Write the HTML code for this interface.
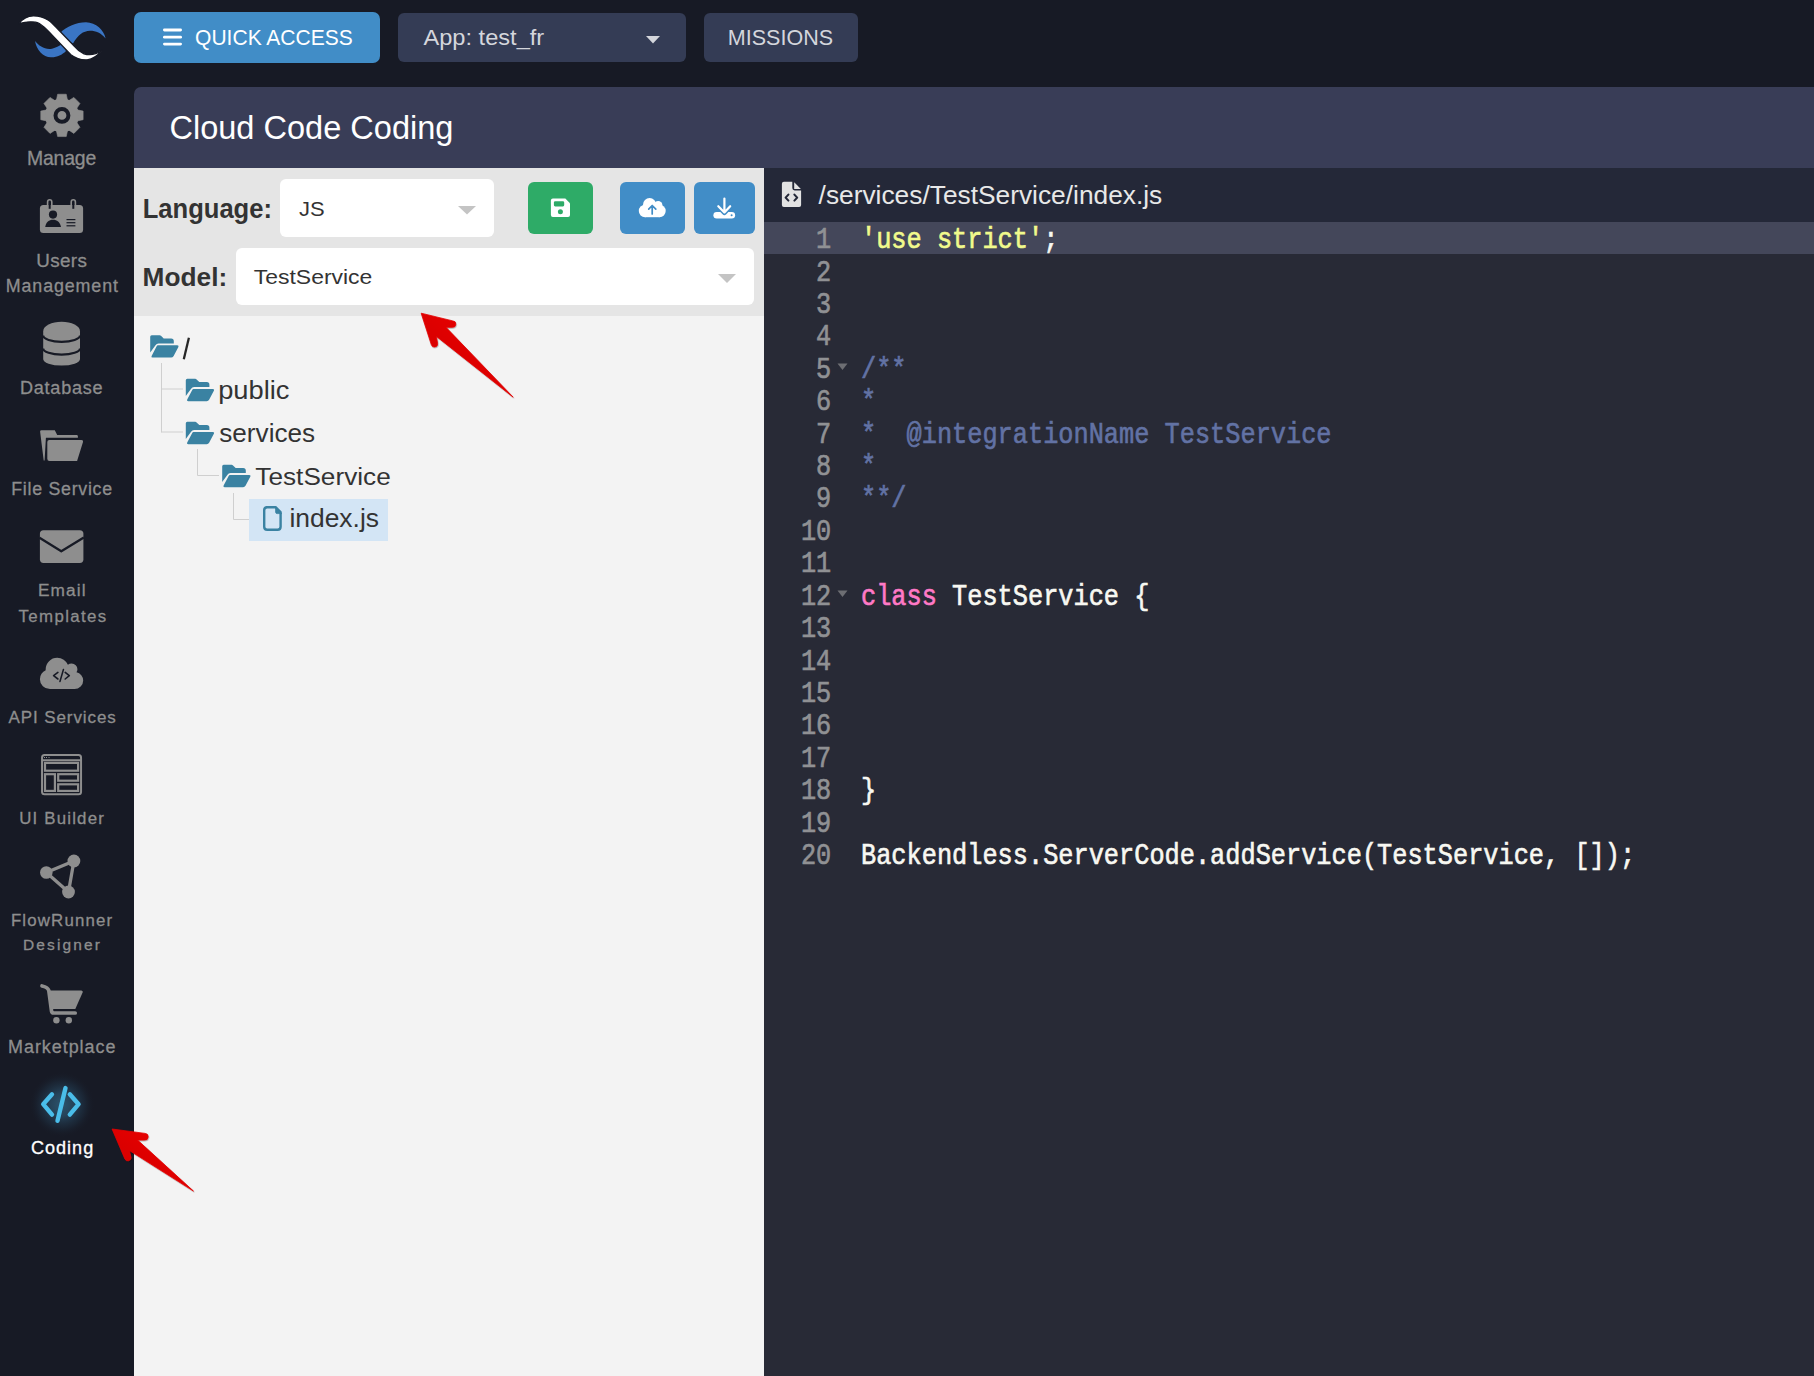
<!DOCTYPE html>
<html><head><meta charset="utf-8"><title>Cloud Code Coding</title>
<style>
html,body{margin:0;padding:0;}
body{width:1814px;height:1376px;background:#171a25;position:relative;overflow:hidden;font-family:"Liberation Sans", sans-serif;}
svg text{white-space:pre;}
</style></head><body>
<div style="position:absolute;left:134px;top:12px;width:246px;height:51px;background:#418dc7;border-radius:7px;"></div><div style="position:absolute;left:398px;top:13px;width:288px;height:49px;background:#343c55;border-radius:6px;"></div><div style="position:absolute;left:704px;top:13px;width:154px;height:49px;background:#343c55;border-radius:6px;"></div><div style="position:absolute;left:134px;top:87px;width:1680px;height:81px;background:#393d57;border-radius:7px 0 0 0;"></div><div style="position:absolute;left:134px;top:168px;width:630px;height:148px;background:#e5e5e5;border-radius:0;"></div><div style="position:absolute;left:134px;top:316px;width:630px;height:1060px;background:#f3f3f3;border-radius:0;"></div><div style="position:absolute;left:280px;top:179px;width:214px;height:58px;background:#ffffff;border-radius:6px;"></div><div style="position:absolute;left:528px;top:182px;width:65px;height:52px;background:#2eab67;border-radius:6px;"></div><div style="position:absolute;left:620px;top:182px;width:65px;height:52px;background:#418dc7;border-radius:6px;"></div><div style="position:absolute;left:694px;top:182px;width:61px;height:52px;background:#418dc7;border-radius:6px;"></div><div style="position:absolute;left:236px;top:248px;width:518px;height:57px;background:#ffffff;border-radius:6px;"></div><div style="position:absolute;left:249px;top:498.5px;width:139px;height:42.5px;background:#d3e5f5;border-radius:0;"></div><div style="position:absolute;left:764px;top:168px;width:1050px;height:1208px;background:#282a36;border-radius:0;"></div><div style="position:absolute;left:764px;top:168px;width:1050px;height:54px;background:#242838;border-radius:0;"></div><div style="position:absolute;left:764px;top:222px;width:1050px;height:32px;background:#44475a;border-radius:0;"></div>
<svg width="1814" height="1376" style="position:absolute;left:0;top:0" viewBox="0 0 1814 1376"><defs>
<radialGradient id="glow"><stop offset="0" stop-color="#2c546e" stop-opacity="1"/><stop offset="0.35" stop-color="#284a62" stop-opacity="0.85"/><stop offset="0.7" stop-color="#1f3346" stop-opacity="0.45"/><stop offset="1" stop-color="#171a25" stop-opacity="0"/></radialGradient>
<linearGradient id="red" x1="0" y1="1" x2="1" y2="0"><stop offset="0" stop-color="#d20000"/><stop offset="0.45" stop-color="#dc0000"/><stop offset="1" stop-color="#f20000"/></linearGradient>
<filter id="sh" x="-20%" y="-20%" width="140%" height="140%"><feDropShadow dx="0.5" dy="0.8" stdDeviation="0.6" flood-color="#000" flood-opacity="0.35"/></filter>
</defs><line x1="164.4" y1="30.0" x2="180.6" y2="30.0" stroke="#fff" stroke-width="2.8" stroke-linecap="round"/><line x1="164.4" y1="37.2" x2="180.6" y2="37.2" stroke="#fff" stroke-width="2.8" stroke-linecap="round"/><line x1="164.4" y1="44.1" x2="180.6" y2="44.1" stroke="#fff" stroke-width="2.8" stroke-linecap="round"/><text x="195.06" y="44.80" font-family="'Liberation Sans'" font-weight="normal" font-size="21.04" fill="#ffffff" transform="translate(0 44.80) scale(1 1.0308) translate(0 -44.80)">QUICK ACCESS</text><text x="423.50" y="45.00" font-family="'Liberation Sans'" font-weight="normal" font-size="23.62" fill="#d4d6dc" transform="translate(0 45.00) scale(1 0.9459) translate(0 -45.00)">App: test_fr</text><polygon points="646,36 660,36 653,43.5" fill="#d4d6dc"/><text x="727.78" y="45.30" font-family="'Liberation Sans'" font-weight="normal" font-size="21.54" fill="#d4d6dc" transform="translate(0 45.30) scale(1 1.0659) translate(0 -45.30)">MISSIONS</text><text x="169.47" y="139.00" font-family="'Liberation Sans'" font-weight="normal" font-size="32.55" fill="#ffffff" transform="translate(0 139.00) scale(1 1.0018) translate(0 -139.00)">Cloud Code Coding</text><text x="142.67" y="217.60" font-family="'Liberation Sans'" font-weight="bold" font-size="25.58" fill="#333333" transform="translate(0 217.60) scale(1 1.0709) translate(0 -217.60)">Language:</text><text x="298.98" y="215.60" font-family="'Liberation Sans'" font-weight="normal" font-size="21.96" fill="#333333" transform="translate(0 215.60) scale(1 0.9170) translate(0 -215.60)">JS</text><polygon points="458,206 476,206 467,214.6" fill="#c4c4c4"/><path d="M552.9,198.4 L565.3,198.4 L570,203.3 L570,215.1 Q570,217.1 568,217.1 L552.9,217.1 Q550.9,217.1 550.9,215.1 L550.9,200.4 Q550.9,198.4 552.9,198.4 Z" fill="#ffffff"/><rect x="553.9" y="201.2" width="10.3" height="5.2" rx="1.3" fill="#2eab67"/><circle cx="560.4" cy="211.8" r="2.5" fill="#2eab67"/><g fill="#ffffff"><circle cx="649.6" cy="204.7" r="6.6"/><circle cx="658.2" cy="205.2" r="4.2"/><circle cx="645.0" cy="211.0" r="6.2"/><circle cx="659.5" cy="211.0" r="6.2"/><rect x="645" y="205" width="14.5" height="12.2"/></g><path d="M652.2,214 L652.2,205.6 M648.7,209.1 L652.2,205.5 L655.8,209.1" stroke="#418dc7" stroke-width="1.7" fill="none" stroke-linecap="round" stroke-linejoin="round"/><rect x="713.4" y="212" width="21.7" height="6.6" rx="3.3" fill="#ffffff"/><path d="M718.3,206.2 L724.4,212.4 L730.2,206.2" stroke="#418dc7" stroke-width="5.2" fill="none" stroke-linecap="round" stroke-linejoin="round"/><path d="M724.4,198.6 L724.4,212 M718.3,206.2 L724.4,212.4 L730.2,206.2" stroke="#ffffff" stroke-width="2.2" fill="none" stroke-linecap="round" stroke-linejoin="round"/><circle cx="731.6" cy="215.2" r="1" fill="#418dc7"/><text x="142.62" y="286.40" font-family="'Liberation Sans'" font-weight="bold" font-size="26.27" fill="#333333" transform="translate(0 286.40) scale(1 0.9596) translate(0 -286.40)">Model:</text><text x="253.84" y="284.00" font-family="'Liberation Sans'" font-weight="normal" font-size="22.94" fill="#333333" transform="translate(0 284.00) scale(1 0.9194) translate(0 -284.00)">TestService</text><polygon points="718,274 736,274 727,283" fill="#c4c4c4"/><line x1="161.5" y1="363" x2="161.5" y2="432.5" stroke="#cfcfcf" stroke-width="1"/><line x1="161.5" y1="389" x2="183" y2="389" stroke="#cfcfcf" stroke-width="1"/><line x1="161.5" y1="432" x2="183" y2="432" stroke="#cfcfcf" stroke-width="1"/><line x1="197.5" y1="449" x2="197.5" y2="475.5" stroke="#cfcfcf" stroke-width="1"/><line x1="197.5" y1="475.5" x2="219" y2="475.5" stroke="#cfcfcf" stroke-width="1"/><line x1="233.5" y1="493" x2="233.5" y2="519.5" stroke="#cfcfcf" stroke-width="1"/><line x1="233.5" y1="519.5" x2="249" y2="519.5" stroke="#cfcfcf" stroke-width="1"/><g transform="translate(0,0)" fill="#3a82a2"><path d="M151.7,335.2 L159.6,335.2 Q160.4,335.2 161,335.8 L163.7,338.5 L171.2,338.5 Q173.8,338.5 173.8,341.2 L173.8,343.4 L158.5,343.4 Q156.5,343.4 155.5,345.2 L150.2,352.5 L150.2,336.7 Q150.2,335.2 151.7,335.2 Z"/><path d="M157.9,345.3 L177.3,345.3 Q179.1,345.4 178.4,346.9 L173.5,356.2 Q172.7,357.6 171.1,357.6 L152.6,357.6 Q150.8,357.6 151.6,356 L156.5,346.6 Q157.1,345.3 157.9,345.3 Z"/></g><line x1="188.9" y1="337.8" x2="183.8" y2="359.2" stroke="#262626" stroke-width="2.3" stroke-linecap="butt"/><g transform="translate(35.6,43.6)" fill="#3a82a2"><path d="M151.7,335.2 L159.6,335.2 Q160.4,335.2 161,335.8 L163.7,338.5 L171.2,338.5 Q173.8,338.5 173.8,341.2 L173.8,343.4 L158.5,343.4 Q156.5,343.4 155.5,345.2 L150.2,352.5 L150.2,336.7 Q150.2,335.2 151.7,335.2 Z"/><path d="M157.9,345.3 L177.3,345.3 Q179.1,345.4 178.4,346.9 L173.5,356.2 Q172.7,357.6 171.1,357.6 L152.6,357.6 Q150.8,357.6 151.6,356 L156.5,346.6 Q157.1,345.3 157.9,345.3 Z"/></g><text x="218.16" y="398.90" font-family="'Liberation Sans'" font-weight="normal" font-size="27.28" fill="#333333" transform="translate(0 398.90) scale(1 0.9440) translate(0 -398.90)">public</text><g transform="translate(35.6,86.6)" fill="#3a82a2"><path d="M151.7,335.2 L159.6,335.2 Q160.4,335.2 161,335.8 L163.7,338.5 L171.2,338.5 Q173.8,338.5 173.8,341.2 L173.8,343.4 L158.5,343.4 Q156.5,343.4 155.5,345.2 L150.2,352.5 L150.2,336.7 Q150.2,335.2 151.7,335.2 Z"/><path d="M157.9,345.3 L177.3,345.3 Q179.1,345.4 178.4,346.9 L173.5,356.2 Q172.7,357.6 171.1,357.6 L152.6,357.6 Q150.8,357.6 151.6,356 L156.5,346.6 Q157.1,345.3 157.9,345.3 Z"/></g><text x="219.28" y="441.80" font-family="'Liberation Sans'" font-weight="normal" font-size="26.15" fill="#333333" transform="translate(0 441.80) scale(1 0.9900) translate(0 -441.80)">services</text><g transform="translate(72,129.6)" fill="#3a82a2"><path d="M151.7,335.2 L159.6,335.2 Q160.4,335.2 161,335.8 L163.7,338.5 L171.2,338.5 Q173.8,338.5 173.8,341.2 L173.8,343.4 L158.5,343.4 Q156.5,343.4 155.5,345.2 L150.2,352.5 L150.2,336.7 Q150.2,335.2 151.7,335.2 Z"/><path d="M157.9,345.3 L177.3,345.3 Q179.1,345.4 178.4,346.9 L173.5,356.2 Q172.7,357.6 171.1,357.6 L152.6,357.6 Q150.8,357.6 151.6,356 L156.5,346.6 Q157.1,345.3 157.9,345.3 Z"/></g><text x="255.38" y="484.90" font-family="'Liberation Sans'" font-weight="normal" font-size="26.19" fill="#333333" transform="translate(0 484.90) scale(1 0.9362) translate(0 -484.90)">TestService</text><path d="M266.2,507.2 L275.6,507.2 L280.6,512.2 L280.6,526.7 Q280.6,529.7 277.6,529.7 L267.2,529.7 Q264.2,529.7 264.2,526.7 L264.2,510.2 Q264.2,507.2 267.2,507.2 Z" fill="none" stroke="#3a82a2" stroke-width="2.4" stroke-linejoin="round"/><path d="M275.6,507.2 L275.6,512 Q275.6,513.6 277.2,513.6 L281.6,513.6 Z" fill="#3a82a2" stroke="#3a82a2" stroke-width="0.8" stroke-linejoin="round"/><text x="289.41" y="527.20" font-family="'Liberation Sans'" font-weight="normal" font-size="26.45" fill="#333333" transform="translate(0 527.20) scale(1 0.9685) translate(0 -527.20)">index.js</text><path d="M783.9,181.8 L792.3,181.8 L792.3,188 Q792.3,190.4 794.7,190.4 L801.1,190.4 L801.1,205.1 Q801.1,207.1 799.1,207.1 L783.9,207.1 Q781.9,207.1 781.9,205.1 L781.9,183.8 Q781.9,181.8 783.9,181.8 Z" fill="#e3e3e3"/><path d="M794.2,182.2 L800.9,188.9 L794.2,188.9 Z" fill="#e3e3e3"/><path d="M788.4,194.6 L785.6,197.6 L788.4,200.6 M794.4,194.6 L797.2,197.6 L794.4,200.6" stroke="#242838" stroke-width="2.1" fill="none" stroke-linecap="round" stroke-linejoin="round"/><text x="818.60" y="204.00" font-family="'Liberation Sans'" font-weight="normal" font-size="26.32" fill="#e8e8e8" transform="translate(0 204.00) scale(1 0.9627) translate(0 -204.00)">/services/TestService/index.js</text><text x="831.3" y="248.10" text-anchor="end" font-family="'Liberation Mono'" font-size="25.3" fill="#909194" stroke="#909194" stroke-width="0.55" transform="translate(0 248.10) scale(1 1.2) translate(0 -248.10)">1</text><text x="861.0" y="248.10" font-family="'Liberation Mono'" font-size="25.3" fill="#f8f8f2" stroke-width="0.55" xml:space="preserve" transform="translate(0 248.10) scale(1 1.2) translate(0 -248.10)"><tspan fill="#f1fa8c" stroke="#f1fa8c">'use strict'</tspan><tspan fill="#f8f8f2" stroke="#f8f8f2">;</tspan></text><text x="831.3" y="280.52" text-anchor="end" font-family="'Liberation Mono'" font-size="25.3" fill="#909194" stroke="#909194" stroke-width="0.55" transform="translate(0 280.52) scale(1 1.2) translate(0 -280.52)">2</text><text x="831.3" y="312.94" text-anchor="end" font-family="'Liberation Mono'" font-size="25.3" fill="#909194" stroke="#909194" stroke-width="0.55" transform="translate(0 312.94) scale(1 1.2) translate(0 -312.94)">3</text><text x="831.3" y="345.36" text-anchor="end" font-family="'Liberation Mono'" font-size="25.3" fill="#909194" stroke="#909194" stroke-width="0.55" transform="translate(0 345.36) scale(1 1.2) translate(0 -345.36)">4</text><text x="831.3" y="377.78" text-anchor="end" font-family="'Liberation Mono'" font-size="25.3" fill="#909194" stroke="#909194" stroke-width="0.55" transform="translate(0 377.78) scale(1 1.2) translate(0 -377.78)">5</text><text x="861.0" y="377.78" font-family="'Liberation Mono'" font-size="25.3" fill="#f8f8f2" stroke-width="0.55" xml:space="preserve" transform="translate(0 377.78) scale(1 1.2) translate(0 -377.78)"><tspan fill="#6272a4" stroke="#6272a4">/**</tspan></text><text x="831.3" y="410.20" text-anchor="end" font-family="'Liberation Mono'" font-size="25.3" fill="#909194" stroke="#909194" stroke-width="0.55" transform="translate(0 410.20) scale(1 1.2) translate(0 -410.20)">6</text><text x="861.0" y="410.20" font-family="'Liberation Mono'" font-size="25.3" fill="#f8f8f2" stroke-width="0.55" xml:space="preserve" transform="translate(0 410.20) scale(1 1.2) translate(0 -410.20)"><tspan fill="#6272a4" stroke="#6272a4">*</tspan></text><text x="831.3" y="442.62" text-anchor="end" font-family="'Liberation Mono'" font-size="25.3" fill="#909194" stroke="#909194" stroke-width="0.55" transform="translate(0 442.62) scale(1 1.2) translate(0 -442.62)">7</text><text x="861.0" y="442.62" font-family="'Liberation Mono'" font-size="25.3" fill="#f8f8f2" stroke-width="0.55" xml:space="preserve" transform="translate(0 442.62) scale(1 1.2) translate(0 -442.62)"><tspan fill="#6272a4" stroke="#6272a4">*  @integrationName TestService</tspan></text><text x="831.3" y="475.04" text-anchor="end" font-family="'Liberation Mono'" font-size="25.3" fill="#909194" stroke="#909194" stroke-width="0.55" transform="translate(0 475.04) scale(1 1.2) translate(0 -475.04)">8</text><text x="861.0" y="475.04" font-family="'Liberation Mono'" font-size="25.3" fill="#f8f8f2" stroke-width="0.55" xml:space="preserve" transform="translate(0 475.04) scale(1 1.2) translate(0 -475.04)"><tspan fill="#6272a4" stroke="#6272a4">*</tspan></text><text x="831.3" y="507.46" text-anchor="end" font-family="'Liberation Mono'" font-size="25.3" fill="#909194" stroke="#909194" stroke-width="0.55" transform="translate(0 507.46) scale(1 1.2) translate(0 -507.46)">9</text><text x="861.0" y="507.46" font-family="'Liberation Mono'" font-size="25.3" fill="#f8f8f2" stroke-width="0.55" xml:space="preserve" transform="translate(0 507.46) scale(1 1.2) translate(0 -507.46)"><tspan fill="#6272a4" stroke="#6272a4">**/</tspan></text><text x="831.3" y="539.88" text-anchor="end" font-family="'Liberation Mono'" font-size="25.3" fill="#909194" stroke="#909194" stroke-width="0.55" transform="translate(0 539.88) scale(1 1.2) translate(0 -539.88)">10</text><text x="831.3" y="572.30" text-anchor="end" font-family="'Liberation Mono'" font-size="25.3" fill="#909194" stroke="#909194" stroke-width="0.55" transform="translate(0 572.30) scale(1 1.2) translate(0 -572.30)">11</text><text x="831.3" y="604.72" text-anchor="end" font-family="'Liberation Mono'" font-size="25.3" fill="#909194" stroke="#909194" stroke-width="0.55" transform="translate(0 604.72) scale(1 1.2) translate(0 -604.72)">12</text><text x="861.0" y="604.72" font-family="'Liberation Mono'" font-size="25.3" fill="#f8f8f2" stroke-width="0.55" xml:space="preserve" transform="translate(0 604.72) scale(1 1.2) translate(0 -604.72)"><tspan fill="#ff79c6" stroke="#ff79c6">class</tspan><tspan fill="#f8f8f2" stroke="#f8f8f2"> TestService {</tspan></text><text x="831.3" y="637.14" text-anchor="end" font-family="'Liberation Mono'" font-size="25.3" fill="#909194" stroke="#909194" stroke-width="0.55" transform="translate(0 637.14) scale(1 1.2) translate(0 -637.14)">13</text><text x="831.3" y="669.56" text-anchor="end" font-family="'Liberation Mono'" font-size="25.3" fill="#909194" stroke="#909194" stroke-width="0.55" transform="translate(0 669.56) scale(1 1.2) translate(0 -669.56)">14</text><text x="831.3" y="701.98" text-anchor="end" font-family="'Liberation Mono'" font-size="25.3" fill="#909194" stroke="#909194" stroke-width="0.55" transform="translate(0 701.98) scale(1 1.2) translate(0 -701.98)">15</text><text x="831.3" y="734.40" text-anchor="end" font-family="'Liberation Mono'" font-size="25.3" fill="#909194" stroke="#909194" stroke-width="0.55" transform="translate(0 734.40) scale(1 1.2) translate(0 -734.40)">16</text><text x="831.3" y="766.82" text-anchor="end" font-family="'Liberation Mono'" font-size="25.3" fill="#909194" stroke="#909194" stroke-width="0.55" transform="translate(0 766.82) scale(1 1.2) translate(0 -766.82)">17</text><text x="831.3" y="799.24" text-anchor="end" font-family="'Liberation Mono'" font-size="25.3" fill="#909194" stroke="#909194" stroke-width="0.55" transform="translate(0 799.24) scale(1 1.2) translate(0 -799.24)">18</text><text x="861.0" y="799.24" font-family="'Liberation Mono'" font-size="25.3" fill="#f8f8f2" stroke-width="0.55" xml:space="preserve" transform="translate(0 799.24) scale(1 1.2) translate(0 -799.24)"><tspan fill="#f8f8f2" stroke="#f8f8f2">}</tspan></text><text x="831.3" y="831.66" text-anchor="end" font-family="'Liberation Mono'" font-size="25.3" fill="#909194" stroke="#909194" stroke-width="0.55" transform="translate(0 831.66) scale(1 1.2) translate(0 -831.66)">19</text><text x="831.3" y="864.08" text-anchor="end" font-family="'Liberation Mono'" font-size="25.3" fill="#909194" stroke="#909194" stroke-width="0.55" transform="translate(0 864.08) scale(1 1.2) translate(0 -864.08)">20</text><text x="861.0" y="864.08" font-family="'Liberation Mono'" font-size="25.3" fill="#f8f8f2" stroke-width="0.55" xml:space="preserve" transform="translate(0 864.08) scale(1 1.2) translate(0 -864.08)"><tspan fill="#f8f8f2" stroke="#f8f8f2">Backendless.ServerCode.addService(TestService, []);</tspan></text><polygon points="837.5,363.5 847.5,363.5 842.5,370.0" fill="#6d6e73"/><polygon points="837.5,590.44 847.5,590.44 842.5,596.94" fill="#6d6e73"/><path d="M56.35,100.41 L57.65,94.23 L66.25,94.23 L67.55,100.41 L68.59,100.84 L73.88,97.39 L79.96,103.47 L76.51,108.76 L76.94,109.80 L83.12,111.10 L83.12,119.70 L76.94,121.00 L76.51,122.04 L79.96,127.33 L73.88,133.41 L68.59,129.96 L67.55,130.39 L66.25,136.57 L57.65,136.57 L56.35,130.39 L55.31,129.96 L50.02,133.41 L43.94,127.33 L47.39,122.04 L46.96,121.00 L40.78,119.70 L40.78,111.10 L46.96,109.80 L47.39,108.76 L43.94,103.47 L50.02,97.39 L55.31,100.84Z" fill="#8e8e8e" stroke="#8e8e8e" stroke-width="0.6" stroke-linejoin="round"/><circle cx="61.95" cy="115.4" r="17" fill="#8e8e8e"/><circle cx="61.95" cy="115.4" r="6.45" fill="none" stroke="#171a25" stroke-width="4"/><text x="26.95" y="165.00" font-family="'Liberation Sans'" font-weight="normal" font-size="19.42" fill="#8e8e8e" stroke="#8e8e8e" stroke-width="0.3" letter-spacing="-0.165" transform="translate(0 165.00) scale(1 1.0000) translate(0 -165.00)">Manage</text><rect x="39.9" y="205" width="43.2" height="28" rx="3.5" fill="#8e8e8e"/><rect x="47.6" y="199.8" width="4.2" height="9.5" rx="2.1" fill="none" stroke="#8e8e8e" stroke-width="1.6"/><rect x="71.2" y="199.8" width="4.2" height="9.5" rx="2.1" fill="none" stroke="#8e8e8e" stroke-width="1.6"/><rect x="48.7" y="204.8" width="2" height="4" fill="#171a25"/><rect x="72.3" y="204.8" width="2" height="4" fill="#171a25"/><circle cx="53" cy="214.6" r="4.1" fill="#171a25"/><path d="M45.2,227 C46,222 49,219.8 53,219.8 C57,219.8 60,222 61,227 Z" fill="#171a25"/><g stroke="#171a25" stroke-width="1.2"><line x1="66.5" y1="219.6" x2="75.4" y2="219.6"/><line x1="66.5" y1="222.7" x2="75.4" y2="222.7"/><line x1="66.5" y1="225.8" x2="75.4" y2="225.8"/></g><text x="36.18" y="267.00" font-family="'Liberation Sans'" font-weight="normal" font-size="18.84" fill="#8e8e8e" stroke="#8e8e8e" stroke-width="0.3" letter-spacing="0.371" transform="translate(0 267.00) scale(1 1.0000) translate(0 -267.00)">Users</text><text x="5.77" y="291.80" font-family="'Liberation Sans'" font-weight="normal" font-size="17.83" fill="#8e8e8e" stroke="#8e8e8e" stroke-width="0.3" letter-spacing="0.904" transform="translate(0 291.80) scale(1 1.0000) translate(0 -291.80)">Management</text><path d="M43.2,331.4 A18.4,9.6 0 0 1 80,331.4 L80,359 A18.4,6.6 0 0 1 43.2,359 Z" fill="#8e8e8e"/><path d="M43.2,335.6 A18.4,6.2 0 0 0 80,335.6 M43.2,348.4 A18.4,6.2 0 0 0 80,348.4" fill="none" stroke="#171a25" stroke-width="2.2"/><text x="19.95" y="394.00" font-family="'Liberation Sans'" font-weight="normal" font-size="18.08" fill="#8e8e8e" stroke="#8e8e8e" stroke-width="0.3" letter-spacing="0.756" transform="translate(0 394.00) scale(1 1.0000) translate(0 -394.00)">Database</text><path d="M40.1,431.6 Q40.1,430.2 41.5,430.2 L54.8,430.2 L57.2,434.9 L76.5,434.9 Q77.9,434.9 77.9,436.3 L77.9,437.8 L45.9,437.8 L44.6,460.5 L43.7,460.5 Z" fill="#8e8e8e"/><path d="M49.3,440 L81.5,440 Q83.5,440 83.0,442 L77.1,460.9 L49.5,460.9 Q47.3,460.9 47.3,458.7 L47.3,442 Q47.3,440 49.3,440 Z" fill="#8e8e8e"/><text x="11.28" y="495.10" font-family="'Liberation Sans'" font-weight="normal" font-size="17.81" fill="#8e8e8e" stroke="#8e8e8e" stroke-width="0.3" letter-spacing="0.713" transform="translate(0 495.10) scale(1 1.0000) translate(0 -495.10)">File Service</text><rect x="39.9" y="530.2" width="43.5" height="32.7" rx="3.6" fill="#8e8e8e"/><polyline points="39.5,537.8 61.3,551.3 83.8,537.6" fill="none" stroke="#171a25" stroke-width="2.3" stroke-linejoin="round"/><text x="37.92" y="596.20" font-family="'Liberation Sans'" font-weight="normal" font-size="17.26" fill="#8e8e8e" stroke="#8e8e8e" stroke-width="0.3" letter-spacing="1.124" transform="translate(0 596.20) scale(1 1.0000) translate(0 -596.20)">Email</text><text x="18.56" y="622.00" font-family="'Liberation Sans'" font-weight="normal" font-size="16.85" fill="#8e8e8e" stroke="#8e8e8e" stroke-width="0.3" letter-spacing="1.369" transform="translate(0 622.00) scale(1 1.0000) translate(0 -622.00)">Templates</text><path d="M1920 384q0 -159 -112.5 -271.5t-271.5 -112.5h-1088q-185 0 -316.5 131.5t-131.5 316.5q0 132 71 241.5t187 163.5q-2 28 -2 43q0 212 150 362t362 150q158 0 286.5 -88t187.5 -230q70 62 166 62q106 0 181 -75t75 -181q0 -75 -41 -138q129 -30 213 -134.5t84 -239.5z " fill="#8e8e8e" transform="translate(39.900,689.100) scale(0.02255,-0.02223)" /><path d="M57.9,672.4 L53.6,675.7 L57.9,679 M65.2,672.4 L69.3,675.7 L65.2,679 M63.4,669.6 L60,681.4" stroke="#171a25" stroke-width="1.6" fill="none" stroke-linecap="round" stroke-linejoin="round"/><text x="8.50" y="723.20" font-family="'Liberation Sans'" font-weight="normal" font-size="16.99" fill="#8e8e8e" stroke="#8e8e8e" stroke-width="0.3" letter-spacing="0.916" transform="translate(0 723.20) scale(1 1.0000) translate(0 -723.20)">API Services</text><g fill="none" stroke="#8e8e8e"><rect x="42.05" y="754.9" width="39" height="39.4" rx="2.5" stroke-width="2"/><line x1="42" y1="760.2" x2="81" y2="760.2" stroke-width="2"/><g stroke-width="2.2"><rect x="45.0" y="762.9" width="33.1" height="7.8"/><rect x="45.0" y="774.2" width="9.9" height="16.7"/><rect x="58.2" y="774.2" width="19.9" height="6.5"/><rect x="58.2" y="784.3" width="19.9" height="6.6"/></g></g><g fill="#8e8e8e"><rect x="44" y="757" width="1" height="1"/><rect x="46" y="757" width="1" height="1"/><rect x="48.5" y="757" width="1" height="1"/></g><text x="19.22" y="823.80" font-family="'Liberation Sans'" font-weight="normal" font-size="16.85" fill="#8e8e8e" stroke="#8e8e8e" stroke-width="0.3" letter-spacing="1.180" transform="translate(0 823.80) scale(1 1.0000) translate(0 -823.80)">UI Builder</text><g stroke="#8e8e8e" stroke-width="3.3" fill="#8e8e8e" stroke-linejoin="round"><polygon points="46.3,872.5 73.9,861 68.5,892" fill="none"/><circle cx="46.3" cy="872.5" r="6.3" stroke="none"/><circle cx="73.9" cy="861" r="6.4" stroke="none"/><circle cx="68.5" cy="892" r="6.4" stroke="none"/></g><text x="10.95" y="925.90" font-family="'Liberation Sans'" font-weight="normal" font-size="16.85" fill="#8e8e8e" stroke="#8e8e8e" stroke-width="0.3" letter-spacing="1.148" transform="translate(0 925.90) scale(1 1.0000) translate(0 -925.90)">FlowRunner</text><text x="22.96" y="950.40" font-family="'Liberation Sans'" font-weight="normal" font-size="15.48" fill="#8e8e8e" stroke="#8e8e8e" stroke-width="0.3" letter-spacing="2.156" transform="translate(0 950.40) scale(1 1.0000) translate(0 -950.40)">Designer</text><path d="M42,986 C45.5,986.8 48,987.5 48.8,990.5 L51.6,1011.4 Q51.9,1013 53.5,1013 L75.2,1013" fill="none" stroke="#8e8e8e" stroke-width="3.7" stroke-linecap="round" stroke-linejoin="round"/><path d="M49.5,990.4 L81.4,990.4 Q83.4,990.6 82.6,992.6 L75.3,1009.1 L51.3,1009.1 Z" fill="#8e8e8e"/><circle cx="56.4" cy="1020.3" r="3.2" fill="#8e8e8e"/><circle cx="68.8" cy="1020.3" r="3.2" fill="#8e8e8e"/><text x="8.06" y="1053.00" font-family="'Liberation Sans'" font-weight="normal" font-size="17.95" fill="#8e8e8e" stroke="#8e8e8e" stroke-width="0.3" letter-spacing="0.964" transform="translate(0 1053.00) scale(1 1.0000) translate(0 -1053.00)">Marketplace</text><circle cx="62" cy="1104.5" r="33" fill="url(#glow)"/><g stroke="#4abde9" stroke-width="4.4" fill="none" stroke-linecap="round" stroke-linejoin="round"><polyline points="52,1094.3 43.2,1104.2 52,1114.6"/><polyline points="69.8,1094.3 78.6,1104.2 69.8,1114.6"/><line x1="65.5" y1="1088.1" x2="57.5" y2="1120.8"/></g><text x="31.00" y="1153.80" font-family="'Liberation Sans'" font-weight="normal" font-size="18.08" fill="#ffffff" stroke="#ffffff" stroke-width="0.3" letter-spacing="0.984" transform="translate(0 1153.80) scale(1 1.0000) translate(0 -1153.80)">Coding</text><path d="M35,41 C36.5,50 43,57 51,57.3 C57,57.5 62,55 66,51 L62,44 C59,46 56,47.5 52,48.7 C45,50 39,46 35,41 Z" fill="#3a75c4"/><path d="M60,33 C67,26 76,22.5 86,22.2 C96,22.5 104,30 105.6,38.4 C101,33 96,30.8 90,30.8 C83,31 78,35 73,43.6 L66,40 Z" fill="#3a75c4"/><path d="M18.8,23.6 C23,18.5 28,16 33.2,15.9 C39,15.8 44,17.5 48,19.9 C51,21.7 53.5,24.5 56.1,27.3 L73.9,45.8 C77,49.5 80,52 84,53.8 C90,55.7 97,53.8 101.9,50.2 C99,54 93,59.3 87.1,59.8 C82,60.2 76,58.5 70.9,54.7 L51.7,34.7 C49,32 47,29.5 44.3,27.3 C41,24.5 38,22.6 35.5,22.2 C31,21.5 26,21.6 18.8,23.6 Z" fill="#ffffff" stroke="#171a25" stroke-width="1.3" stroke-linejoin="round"/><path d="M421.2,313.2 L452.8,320.9 A3.2,3.2 0 0 1 452.4,327.3 L446,327.3 L513.2,397.2 L436.4,336.4 L437.6,343.6 A3.2,3.2 0 0 1 431.3,344.6 Z" fill="url(#red)" stroke="#e40000" stroke-width="0.8" stroke-linejoin="round" filter="url(#sh)"/><path d="M112.1,1129 L145.1,1133.4 A3.3,3.3 0 0 1 144.5,1140.1 L137.6,1140.1 L193.5,1191.1 L129.4,1150.5 L131.1,1157.8 A3.3,3.3 0 0 1 125.0,1159.2 Z" fill="url(#red)" stroke="#e40000" stroke-width="0.8" stroke-linejoin="round" filter="url(#sh)"/></svg>
</body></html>
